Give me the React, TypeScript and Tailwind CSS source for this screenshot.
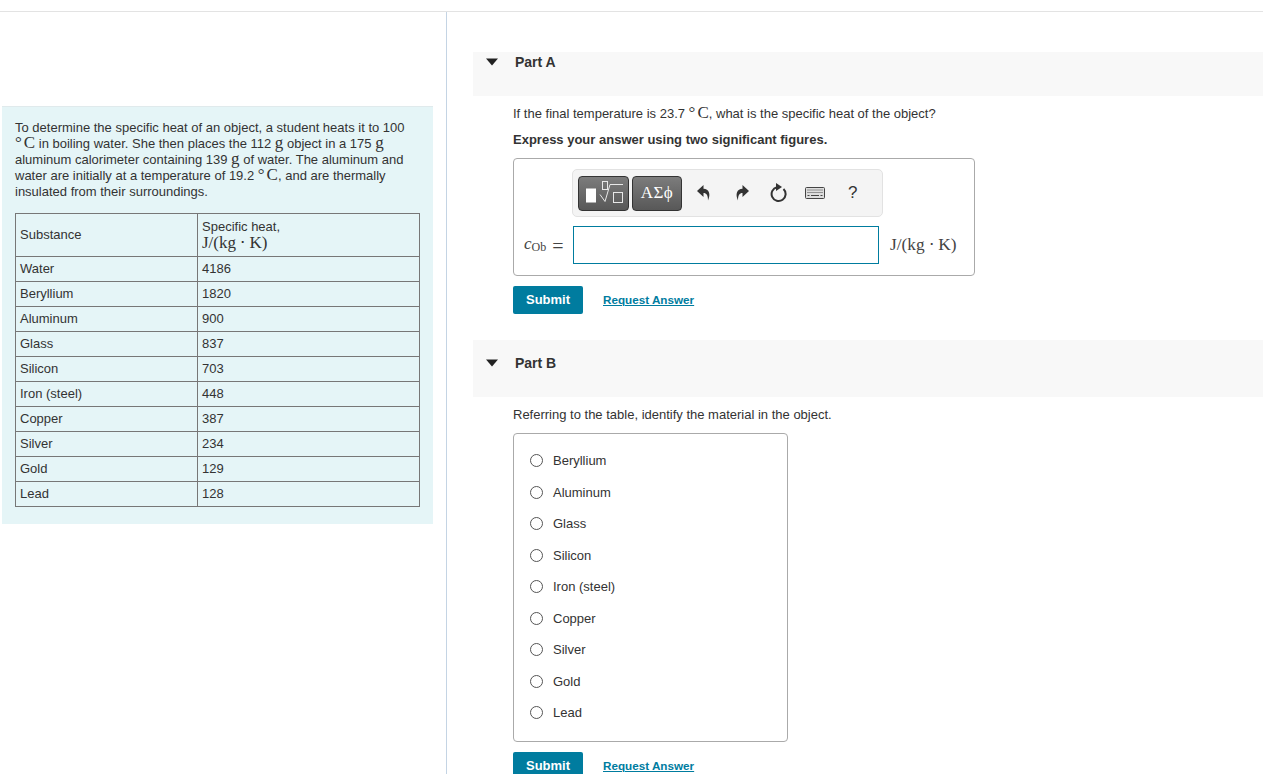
const substances = [
  ['Water', '4186'],
  ['Beryllium', '1820'],
  ['Aluminum', '900'],
  ['Glass', '837'],
  ['Silicon', '703'],
  ['Iron (steel)', '448'],
  ['Copper', '387'],
  ['Silver', '234'],
  ['Gold', '129'],
  ['Lead', '128'],
];

const choices = ['Beryllium', 'Aluminum', 'Glass', 'Silicon', 'Iron (steel)', 'Copper', 'Silver', 'Gold', 'Lead'];

function M({ children }: { children: React.ReactNode }) {
  return <span className="font-['Liberation_Serif',serif] text-[17px] leading-[0]">{children}</span>;
}

function Deg() {
  return (
    <M>
      <span className="mr-[2px]">°</span>C
    </M>
  );
}

function Arrow() {
  return (
    <svg width="12" height="8" viewBox="0 0 12 8" className="shrink-0">
      <path d="M0 0.5h12L6 7.5z" fill="#222" />
    </svg>
  );
}

function PartHeader({ title, height }: { title: string; height: string }) {
  return (
    <div className={`flex items-start bg-[#f8f8f8] pl-[13px] ${height}`}>
      <div className="pt-[6px]">
        <Arrow />
      </div>
      <div className="ml-[17px] pt-[2px] text-[14px] font-bold leading-[16px] text-[#333]">{title}</div>
    </div>
  );
}

function SubmitRow() {
  return (
    <div className="flex items-center">
      <div className="flex h-[28px] w-[70px] items-center justify-center rounded-[2px] bg-[#007c9f] text-[13px] font-bold text-white">
        Submit
      </div>
      <div className="ml-[20px] text-[11.7px] font-bold text-[#007c9f] underline">Request Answer</div>
    </div>
  );
}

function Toolbar() {
  return (
    <div className="ml-[58px] flex h-[48px] w-[311px] items-center rounded-[5px] border border-[#e2e2e2] bg-[#f4f4f4] pl-[5px]">
      <div className="flex h-[35px] w-[51px] items-center justify-center rounded-[4px] border border-[#333] bg-gradient-to-b from-[#7c7c7c] to-[#585858]">
        <svg width="40" height="28" viewBox="0 0 40 28" fill="none">
          <rect x="2" y="9.5" width="10" height="14" fill="#fff" />
          <rect x="18.5" y="2.5" width="5" height="8" stroke="#e8e8e8" strokeWidth="1" />
          <path d="M16 15.5l5 7 5-17h13" stroke="#e8e8e8" strokeWidth="1" />
          <rect x="29.5" y="13.5" width="9" height="10" stroke="#e8e8e8" strokeWidth="1" />
        </svg>
      </div>
      <div className="ml-[3px] flex h-[35px] w-[50px] items-center justify-center rounded-[4px] border border-[#333] bg-gradient-to-b from-[#7c7c7c] to-[#585858] font-['Liberation_Serif',serif] text-[17px] tracking-[0.5px] text-white">
        ΑΣϕ
      </div>
      <svg width="14" height="16" viewBox="0 0 14 16" className="ml-[15px]">
        <path d="M6.5 0L0 6l6.5 6V8c3 0 4.5 2 4.5 7.5C14 9 12 3.8 6.5 3.8z" fill="#333" />
      </svg>
      <svg width="14" height="16" viewBox="0 0 14 16" className="ml-[24px]">
        <path d="M7.5 0L14 6l-6.5 6V8C4.5 8 3 10 3 15.5 0 9 2 3.8 7.5 3.8z" fill="#333" />
      </svg>
      <svg width="18" height="20" viewBox="0 0 18 20" fill="none" className="ml-[21px]">
        <path d="M7 4.2A7 7 0 1 0 13.5 6" stroke="#333" strokeWidth="2" />
        <path d="M6 0l6 4-6 4z" fill="#333" />
      </svg>
      <svg width="20" height="12" viewBox="0 0 20 12" fill="none" className="ml-[17px]">
        <rect x="0.5" y="0.5" width="19" height="11" rx="1" fill="#ddd" stroke="#444" />
        <path d="M2.5 3h15M2.5 5.5h15" stroke="#444" strokeWidth="1" strokeDasharray="1 1" />
        <path d="M2.5 8.5h2M6 8.5h8M15.5 8.5h2" stroke="#444" strokeWidth="1" />
      </svg>
      <div className="ml-[23px] text-[17px] text-[#333]">?</div>
    </div>
  );
}

export default function App() {
  return (
    <div className="h-[774px] overflow-hidden bg-white pt-[11px] font-['Liberation_Sans',sans-serif] text-[13px] text-[#333]">
      <div className="flex h-[763px] border-t border-[#e3e3e3]">
        <div className="w-[447px] shrink-0 border-r border-[#c4d4e4] pl-[2px] pr-[13px] pt-[94px]">
          <div className="h-[418px] border-t border-[#e0eaec] bg-[#e5f5f7] pl-[13px] pr-[13px] pt-[13px]">
            <p className="leading-[16px]">
              To determine the specific heat of an object, a student heats it to 100
              <br />
              <Deg /> in boiling water. She then places the 112 <M>g</M> object in a 175 <M>g</M>
              <br />
              aluminum calorimeter containing 139 <M>g</M> of water. The aluminum and
              <br />
              water are initially at a temperature of 19.2 <Deg />, and are thermally
              <br />
              insulated from their surroundings.
            </p>
            <table className="mt-[13px] w-[405px] table-fixed border-collapse border border-[#777]">
              <colgroup>
                <col className="w-[182px]" />
                <col />
              </colgroup>
              <tbody>
                <tr className="h-[43px]">
                  <td className="border border-[#777] px-[4px]">Substance</td>
                  <td className="border border-[#777] px-[4px] leading-[16px]">
                    Specific heat,
                    <br />
                    <span className="font-['Liberation_Serif',serif] text-[17px]">J/(kg ⋅ K)</span>
                  </td>
                </tr>
                {substances.map(([name, heat]) => (
                  <tr key={name} className="h-[25px]">
                    <td className="border border-[#777] px-[4px]">{name}</td>
                    <td className="border border-[#777] px-[4px]">{heat}</td>
                  </tr>
                ))}
              </tbody>
            </table>
          </div>
        </div>

        <div className="min-w-0 flex-1 pl-[26px] pt-[40px]">
          <PartHeader title="Part A" height="h-[44px]" />
          <div className="pl-[40px]">
            <p className="mt-[9px] leading-[18px]">
              If the final temperature is 23.7 <Deg />, what is the specific heat of the object?
            </p>
            <p className="mt-[8px] font-bold leading-[18px]">Express your answer using two significant figures.</p>
            <div className="mt-[9px] h-[118px] w-[462px] rounded-[4px] border border-[#aaa] pt-[10px]">
              <Toolbar />
              <div className="mt-[9px] flex items-center">
                <div className="ml-[10px] flex w-[49px] items-baseline font-['Liberation_Serif',serif] text-[#444]">
                  <i className="-translate-y-[1px] text-[17px]">c</i>
                  <span className="translate-y-[1px] text-[12px]">Ob</span>
                  <span className="ml-[6px] translate-y-[3px] text-[20px] leading-none">=</span>
                </div>
                <div className="h-[38px] w-[306px] border border-[#007c9f] bg-white" />
                <div className="ml-[11px] font-['Liberation_Serif',serif] text-[17.3px] text-[#444]">J/(kg ⋅ K)</div>
              </div>
            </div>
            <div className="mt-[10px]">
              <SubmitRow />
            </div>
          </div>

          <div className="mt-[26px]">
            <PartHeader title="Part B" height="h-[57px] pt-[13px]" />
          </div>
          <div className="pl-[40px]">
            <p className="mt-[9px] leading-[18px]">Referring to the table, identify the material in the object.</p>
            <div className="mt-[9px] flex h-[309px] w-[275px] flex-col rounded-[4px] border border-[#aaa] pl-[16px] pt-[11px]">
              {choices.map((c) => (
                <div key={c} className="flex h-[31.5px] items-center">
                  <span className="h-[13px] w-[13px] rounded-full border border-[#555] bg-white" />
                  <span className="ml-[10px]">{c}</span>
                </div>
              ))}
            </div>
            <div className="mt-[10px]">
              <SubmitRow />
            </div>
          </div>
        </div>
      </div>
    </div>
  );
}
